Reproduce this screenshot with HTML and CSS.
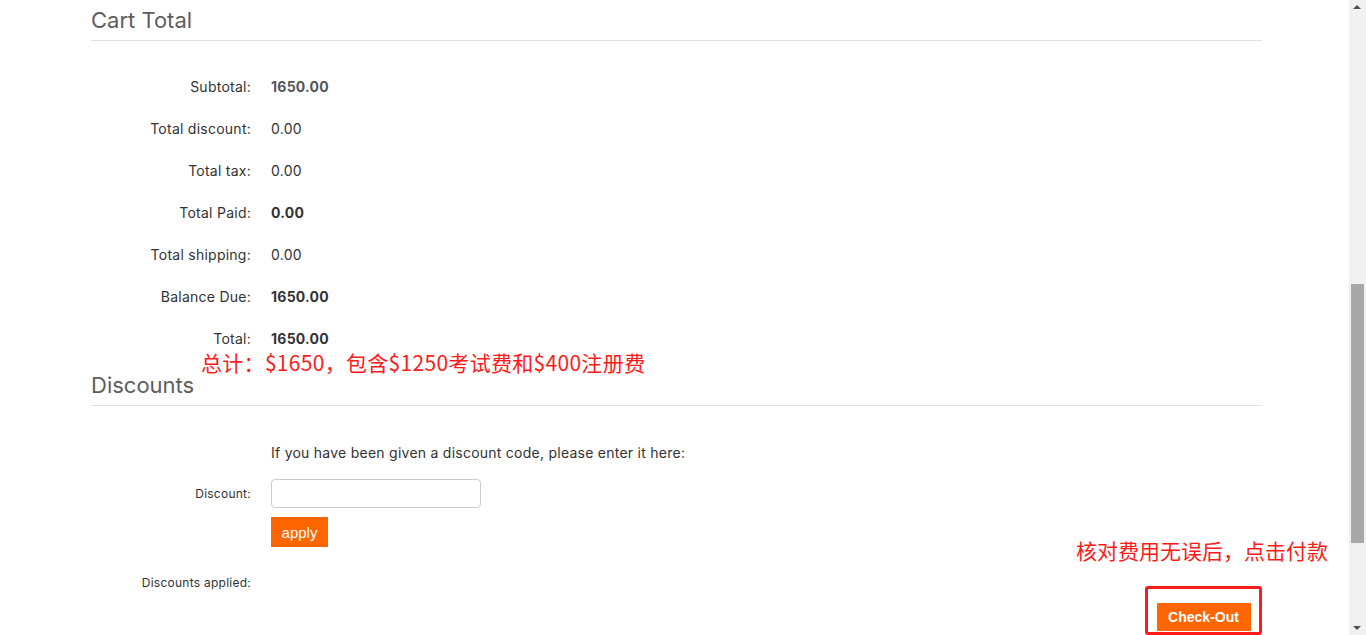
FILE: index.html
```html
<!DOCTYPE html>
<html lang="zh-CN">
<head>
    <meta charset="UTF-8">
    <title>Cart Total</title>
    <link rel="stylesheet" href="styles.css">
</head>
<body>
    <div class="page">
        <div class="section-title">Cart Total</div>
        <div class="totals">
            <div class="row"><span class="label">Subtotal:</span><span class="value strong grey">1650.00</span></div>
            <div class="row"><span class="label">Total discount:</span><span class="value">0.00</span></div>
            <div class="row"><span class="label">Total tax:</span><span class="value">0.00</span></div>
            <div class="row"><span class="label">Total Paid:</span><span class="value strong">0.00</span></div>
            <div class="row"><span class="label">Total shipping:</span><span class="value">0.00</span></div>
            <div class="row"><span class="label">Balance Due:</span><span class="value strong">1650.00</span></div>
            <div class="row total-row">
                <span class="label">Total:</span><span class="value strong">1650.00</span>
                <span class="note note-total">总计：$1650，包含$1250考试费和$400注册费</span>
            </div>
        </div>

        <div class="section-title">Discounts</div>
        <div class="discounts">
            <div class="row small-row"><span class="label"></span><span class="value">If you have been given a discount code, please enter it here:</span></div>
            <div class="row input-row">
                <label class="label small" for="discount">Discount:</label>
                <input type="text" id="discount" class="discount-input">
            </div>
            <div class="row button-row">
                <span class="label"></span>
                <button class="btn-apply">apply</button>
            </div>
            <div class="row applied-row">
                <span class="label small">Discounts applied:</span>
                <span class="value"></span>
            </div>
        </div>

        <div class="checkout">
            <span class="note note-pay">核对费用无误后，点击付款</span>
            <div class="checkout-box">
                <button class="btn-checkout">Check-Out</button>
            </div>
        </div>
    </div>

    <div class="scrollbar">
        <span class="arrow up"></span>
        <span class="thumb"></span>
        <span class="arrow down"></span>
    </div>
</body>
</html>
```

FILE: styles.css
```css
html, body {
    height: 100%;
    overflow: hidden;
}

body {
    font-family: Inter, "Open Sans", sans-serif;
    margin: 0;
    padding: 0;
    background-color: #fff;
    color: #333;
    letter-spacing: 0.25px;
}

.page {
    margin-left: 91px;
    width: 1171px;
}

.section-title {
    font-size: 22px;
    color: #5e5e5e;
    height: 40px;
    line-height: 40px;
    border-bottom: 1px solid #e2e2e2;
    letter-spacing: 0;
}

.totals {
    padding-top: 24px;
}

.row {
    display: grid;
    grid-template-columns: 160px auto;
    column-gap: 20px;
    align-items: center;
    height: 42px;
    font-size: 14px;
    position: relative;
}

.label {
    text-align: right;
    color: #333;
}

.value {
    color: #333;
}

.strong {
    font-weight: bold;
}

.grey {
    color: #555;
}

.total-row {
    margin-bottom: 6px;
}

.note {
    position: absolute;
    color: #ff1a1a;
    font-family: "Noto Sans CJK SC", sans-serif;
    font-size: 21px;
    white-space: nowrap;
    letter-spacing: 0;
}

.note-total {
    left: 110px;
    top: 30px;
    letter-spacing: 0.3px;
}

.discounts {
    padding-top: 28px;
}

.small-row {
    height: 36px;
}

.small {
    font-size: 12px;
}

.input-row {
    height: 44px;
    margin-top: 1px;
}

.discount-input {
    width: 210px;
    height: 29px;
    box-sizing: border-box;
    border: 1px solid #ccc;
    border-radius: 4px;
}

.button-row {
    height: 30px;
    margin-top: 2px;
}

.btn-apply {
    width: 57px;
    height: 30px;
    background-color: #ff6600;
    color: #fff;
    border: none;
    font-family: "Liberation Sans Narrow", "Liberation Sans", sans-serif;
    font-size: 15px;
    padding: 0;
    letter-spacing: 0;
}

.applied-row {
    margin-top: 14px;
    height: 42px;
}

.checkout {
    position: absolute;
    left: 1076px;
    top: 535px;
    width: 270px;
}

.note-pay {
    position: static;
    display: block;
}

.checkout-box {
    position: absolute;
    left: 69px;
    top: 51px;
    width: 111px;
    height: 42px;
    border: 3px solid #ff1a1a;
    border-radius: 3px;
    display: flex;
    justify-content: center;
    align-items: flex-end;
    padding-bottom: 1px;
}

.btn-checkout {
    width: 94px;
    height: 28px;
    background-color: #ff6600;
    color: #fff;
    border: none;
    font-family: "Liberation Sans", Arial, sans-serif;
    font-weight: bold;
    font-size: 14px;
    padding: 0;
    letter-spacing: 0;
}

.scrollbar {
    position: fixed;
    top: 0;
    right: 0;
    width: 17px;
    height: 100%;
    background-color: #f1f1f1;
}

.thumb {
    position: absolute;
    left: 2px;
    top: 284px;
    width: 13px;
    height: 259px;
    background-color: #a8a8a8;
}

.arrow {
    position: absolute;
    left: 4px;
    width: 0;
    height: 0;
    border-left: 4px solid transparent;
    border-right: 4px solid transparent;
}

.arrow.up {
    top: 5px;
    border-bottom: 4px solid #505050;
}

.arrow.down {
    bottom: 5px;
    border-top: 4px solid #505050;
}
```
